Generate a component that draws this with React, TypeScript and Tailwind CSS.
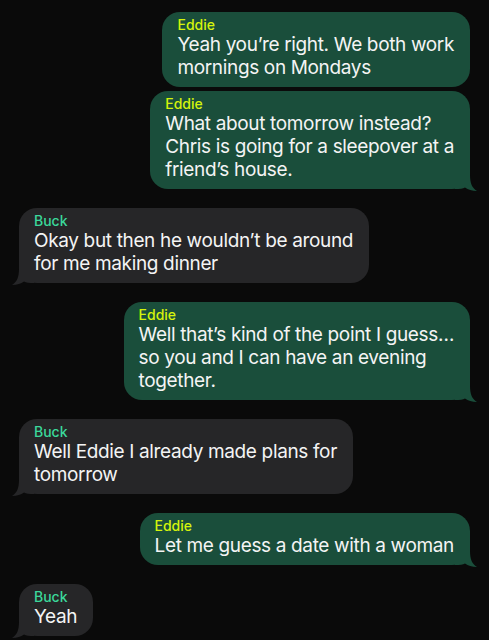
import React from 'react';

type Msg = {
  from: 'Eddie' | 'Buck';
  lines: string[];
  tail: boolean;
  gap: string;
};

const messages: Msg[] = [
  { from: 'Eddie', lines: ['Yeah you\u2019re right. We both work', 'mornings on Mondays'], tail: false, gap: 'mt-0' },
  {
    from: 'Eddie',
    lines: ['What about tomorrow instead?', 'Chris is going for a sleepover at a', 'friend\u2019s house.'],
    tail: true,
    gap: 'mt-[4px]',
  },
  { from: 'Buck', lines: ['Okay but then he wouldn\u2019t be around', 'for me making dinner'], tail: true, gap: 'mt-[19px]' },
  {
    from: 'Eddie',
    lines: ['Well that\u2019s kind of the point I guess\u2026', 'so you and I can have an evening', 'together.'],
    tail: true,
    gap: 'mt-[19px]',
  },
  { from: 'Buck', lines: ['Well Eddie I already made plans for', 'tomorrow'], tail: true, gap: 'mt-[19px]' },
  { from: 'Eddie', lines: ['Let me guess a date with a woman'], tail: true, gap: 'mt-[19px]' },
  { from: 'Buck', lines: ['Yeah'], tail: true, gap: 'mt-[19px]' },
];

function Tail({ mine }: { mine: boolean }) {
  return (
    <svg
      width="22"
      height="22"
      viewBox="0 0 22 22"
      className={`absolute bottom-[-2px] ${mine ? 'right-[-7px]' : 'left-[-7px] -scale-x-100'}`}
    >
      <path
        d="M0 0 H15 V6 C15 14 17 19 22 22 C17 22 13 20.5 10 18.5 C8 19.6 5 20 0 20 Z"
        fill={mine ? '#1a4e3b' : '#262628'}
      />
    </svg>
  );
}

function Bubble({ msg }: { msg: Msg }) {
  const mine = msg.from === 'Eddie';
  return (
    <div className={`flex ${mine ? 'justify-end' : 'justify-start'} ${msg.gap}`}>
      <div
        className={`relative rounded-[18px] pl-[15px] pr-[16px] pt-[5px] pb-[8px] ${
          mine ? 'bg-[#1a4e3b]' : 'bg-[#262628]'
        }`}
      >
        {msg.tail && <Tail mine={mine} />}
        <div
          className={`relative text-[14px] leading-[16px] font-medium ${
            mine ? 'text-[#d4f40c]' : 'text-[#3bd89b]'
          }`}
        >
          {msg.from}
        </div>
        <div className="relative text-[19px] leading-[23px] text-[#f4f4f4] tracking-[-0.35px]">
          {msg.lines.map((l, i) => (
            <div key={i} className="whitespace-nowrap">
              {l}
            </div>
          ))}
        </div>
      </div>
    </div>
  );
}

export default function App() {
  return (
    <div
      className="w-[489px] h-[640px] overflow-hidden bg-[#0a0a0a] px-[19px] pt-[12px]"
      style={{ fontFamily: 'Inter, "Noto Sans", sans-serif' }}
    >
      {messages.map((m, i) => (
        <Bubble key={i} msg={m} />
      ))}
    </div>
  );
}
